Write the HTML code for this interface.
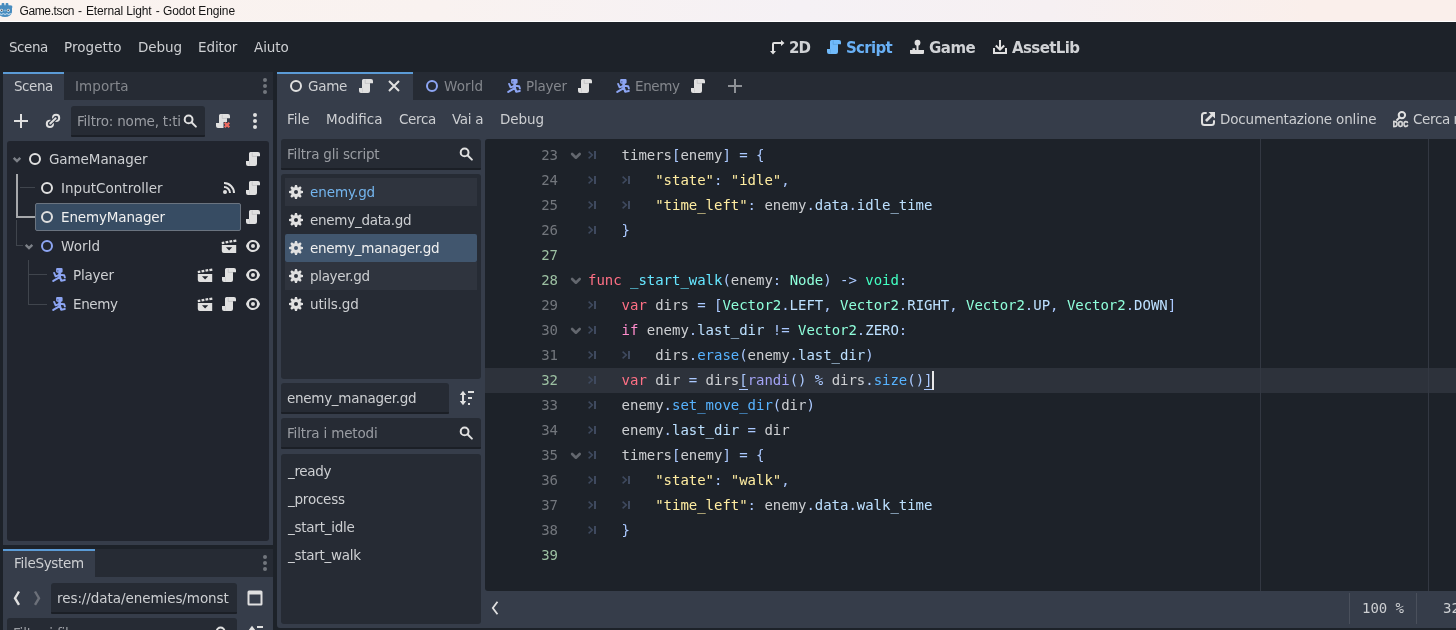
<!DOCTYPE html>
<html><head><meta charset="utf-8"><title>Game.tscn - Eternal Light - Godot Engine</title>
<style>
*{box-sizing:border-box;margin:0;padding:0}
html,body{width:1456px;height:630px;overflow:hidden;background:#1d2229}
body{position:relative;will-change:transform;font-family:"DejaVu Sans","Liberation Sans",sans-serif;font-size:13.5px;color:#cdcfd2}
.a{position:absolute}
.t{position:absolute;white-space:nowrap;line-height:20px;height:20px}
svg{position:absolute;overflow:visible}
#title{left:0;top:0;width:1456px;height:22px;background:linear-gradient(90deg,#faf3ef 0%,#f9f2f0 30%,#f5f1f5 55%,#f6f0f2 72%,#faefeb 90%,#faefeb 100%);border-bottom:1px solid #fff}
#title .t{color:#151515;font-family:"Liberation Sans",sans-serif;font-size:12px;top:1px}
.menu .t{top:37px;font-size:13.5px;color:#cdcfd2}
.mainb .t{top:37.5px;font-weight:bold;font-size:15px;color:#d0d2d5}
.tabbar{background:#262b34}
.tabsel{background:#363d4a;border-top:2px solid #5b9bd6}
.panel{background:#363d4a}
.dark{background:#1d2229}
.inp{background:#262b34;border-radius:3px 3px 1px 1px;border-bottom:2px solid #1b1f26}
.ph{color:#9a9da3}
.dim{color:#84878d}
.code{font-family:"DejaVu Sans Mono","Liberation Mono",monospace;font-size:14px;letter-spacing:-0.03px}
.ln{position:absolute;left:485px;width:971px;height:25px}
.ln .n{position:absolute;left:29px;width:44px;text-align:right;top:2px;line-height:20px;color:#73777d;font-family:"DejaVu Sans Mono","Liberation Mono",monospace;font-size:14px;letter-spacing:-0.03px}
.ln .n.s{color:#9cc0a2}
.ln .c{position:absolute;left:103px;top:2px;font-variant-ligatures:none;line-height:20px;white-space:pre;font-family:"DejaVu Sans Mono","Liberation Mono",monospace;font-size:14px;letter-spacing:-0.03px;color:#cdcfd2}
.ul{position:absolute;top:21px;width:8.400px;height:1px;background:#abc9ff}.caret{position:absolute;left:447.400px;top:3px;width:1.500px;height:19px;background:#e8e8e8}
.k{color:#ff7085}.cf{color:#ff8ccc}.bt{color:#42ffc2}.et{color:#8fffdb}.fd{color:#66e6ff}.fc{color:#57b3ff}.mv{color:#bce0ff}.st{color:#ffeda1}.sy{color:#abc9ff}.gf{color:#a3a3f5}
</style></head><body>
<div id="title" class="a"><span class="t" style="left:19.500px;letter-spacing:-0.38px">Game.tscn</span><span class="t" style="left:78px;letter-spacing:0.20px">-</span><span class="t" style="left:86px;letter-spacing:-0.15px">Eternal Light</span><span class="t" style="left:155.800px;letter-spacing:0.20px">-</span><span class="t" style="left:163px;letter-spacing:-0.12px">Godot Engine</span></div>

<div class="menu">
<span class="t" style="left:9px;letter-spacing:-0.47px">Scena</span>
<span class="t" style="left:64px;letter-spacing:0.05px">Progetto</span>
<span class="t" style="left:138px;letter-spacing:-0.08px">Debug</span>
<span class="t" style="left:198px;letter-spacing:-0.11px">Editor</span>
<span class="t" style="left:254px;letter-spacing:-0.07px">Aiuto</span>
</div>
<div class="mainb">
<span class="t" style="left:789px;letter-spacing:-1.01px">2D</span>
<span class="t" style="left:846px;color:#69b0f5;letter-spacing:-0.68px">Script</span>
<span class="t" style="left:929px;letter-spacing:-0.48px">Game</span>
<span class="t" style="left:1012px;letter-spacing:-0.60px">AssetLib</span>
</div>

<!-- left dock: Scene -->
<div class="a tabbar" style="left:3px;top:72px;width:270px;height:28px"></div>
<div class="a tabsel" style="left:3px;top:72px;width:61px;height:28px"></div>
<span class="t" style="left:14px;top:76px;letter-spacing:-0.47px">Scena</span>
<span class="t dim" style="left:75px;top:76px;letter-spacing:0.08px">Importa</span>
<div class="a panel" style="left:3px;top:100px;width:270px;height:445px"></div>
<div class="a inp" style="left:71px;top:106px;width:134px;height:31px"></div>
<span class="t ph" style="left:77px;top:111px;letter-spacing:-0.21px">Filtro: nome, t:ti</span>
<div class="a" style="left:7px;top:141px;width:262px;height:399.500px;border-radius:3px;background:#21252e"></div>
<div class="a" style="left:35px;top:203px;width:206px;height:28px;background:#374c63;border:1px solid #6b7480;border-radius:2px"></div>
<div id="tl">
<div class="a" style="left:16px;top:174px;width:2px;height:44px;background:#a6a8ab"></div>
<div class="a" style="left:16px;top:216px;width:19px;height:2px;background:#a6a8ab"></div>
<div class="a" style="left:20px;top:187px;width:15px;height:1px;background:#40454d"></div>
<div class="a" style="left:16px;top:220px;width:1px;height:26px;background:#40454d"></div>
<div class="a" style="left:16px;top:245px;width:7px;height:1px;background:#40454d"></div>
<div class="a" style="left:28px;top:260px;width:1px;height:45px;background:#40454d"></div>
<div class="a" style="left:28px;top:274px;width:19px;height:1px;background:#40454d"></div>
<div class="a" style="left:28px;top:304px;width:19px;height:1px;background:#40454d"></div>
</div>
<span class="t" style="left:49px;top:149px;letter-spacing:-0.09px">GameManager</span>
<span class="t" style="left:61px;top:178px;letter-spacing:0.02px">InputController</span>
<span class="t" style="left:61px;top:207px;color:#f0f0f0;letter-spacing:-0.15px">EnemyManager</span>
<span class="t" style="left:61px;top:236px;letter-spacing:0.11px">World</span>
<span class="t" style="left:73px;top:265px;letter-spacing:-0.21px">Player</span>
<span class="t" style="left:73px;top:294px;letter-spacing:-0.40px">Enemy</span>

<!-- left dock: FileSystem -->
<div class="a tabbar" style="left:3px;top:549px;width:270px;height:28px"></div>
<div class="a tabsel" style="left:3px;top:549px;width:92px;height:28px"></div>
<span class="t" style="left:14px;top:553px;letter-spacing:-0.30px">FileSystem</span>
<div class="a panel" style="left:3px;top:577px;width:270px;height:53px"></div>
<div class="a inp" style="left:51px;top:583px;width:186px;height:31px"></div>
<span class="t" style="left:57px;top:588px;letter-spacing:-0.07px">res://data/enemies/monst</span>
<div class="a inp" style="left:7px;top:618px;width:230px;height:31px"></div>
<span class="t ph" style="left:13px;top:623px;letter-spacing:-0.20px">Filtra i file</span>

<!-- main -->
<div class="a tabbar" style="left:277px;top:72px;width:1179px;height:28px"></div>
<div class="a tabsel" style="left:277px;top:72px;width:136px;height:28px"></div>
<span class="t" style="left:308px;top:76px;letter-spacing:-0.29px">Game</span>
<span class="t dim" style="left:444px;top:76px;letter-spacing:0.11px">World</span>
<span class="t dim" style="left:526px;top:76px;letter-spacing:-0.21px">Player</span>
<span class="t dim" style="left:635px;top:76px;letter-spacing:-0.40px">Enemy</span>
<div class="a panel" style="left:277px;top:100px;width:1179px;height:528px;border-radius:0 0 0 3px"></div>
<span class="t" style="left:287px;top:109px;letter-spacing:-0.05px">File</span>
<span class="t" style="left:326px;top:109px;letter-spacing:-0.00px">Modifica</span>
<span class="t" style="left:399px;top:109px;letter-spacing:-0.37px">Cerca</span>
<span class="t" style="left:452px;top:109px;letter-spacing:-0.34px">Vai a</span>
<span class="t" style="left:500px;top:109px;letter-spacing:-0.08px">Debug</span>
<span class="t" style="left:1220px;top:109px;letter-spacing:-0.16px">Documentazione online</span>
<span class="t" style="left:1413px;top:109px;letter-spacing:-0.37px">Cerca</span>
<span class="t" style="left:1453.500px;top:109px;letter-spacing:-0.19px">nella guida</span>

<!-- script list -->
<div class="a inp" style="left:281px;top:139px;width:200px;height:31px"></div>
<span class="t ph" style="left:287px;top:144px;letter-spacing:-0.19px">Filtra gli script</span>
<div class="a" style="left:281px;top:174px;width:200px;height:204.500px;background:#262b34;border-radius:3px"></div>
<div class="a" style="left:285px;top:178px;width:192px;height:28px;background:#2f343e"></div>
<div class="a" style="left:285px;top:234px;width:192px;height:28px;background:#41566e;border-radius:2px"></div>
<div class="a" style="left:285px;top:262px;width:192px;height:28px;background:#2f343e"></div>
<span class="t" style="left:310px;top:182px;color:#74b5ee;letter-spacing:-0.09px">enemy.gd</span>
<span class="t" style="left:310px;top:210px;letter-spacing:-0.28px">enemy_data.gd</span>
<span class="t" style="left:310px;top:238px;color:#f0f0f0;letter-spacing:-0.29px">enemy_manager.gd</span>
<span class="t" style="left:310px;top:266px;letter-spacing:-0.33px">player.gd</span>
<span class="t" style="left:310px;top:294px;letter-spacing:-0.15px">utils.gd</span>
<div class="a inp" style="left:281px;top:383px;width:168px;height:31px"></div>
<span class="t" style="left:287px;top:388px;letter-spacing:-0.29px">enemy_manager.gd</span>
<div class="a inp" style="left:281px;top:418px;width:200px;height:31px"></div>
<span class="t ph" style="left:287px;top:423px;letter-spacing:-0.17px">Filtra i metodi</span>
<div class="a" style="left:281px;top:453.500px;width:200px;height:170px;background:#262b34;border-radius:3px"></div>
<span class="t" style="left:288px;top:461px;letter-spacing:-0.32px">_ready</span>
<span class="t" style="left:288px;top:489px;letter-spacing:-0.23px">_process</span>
<span class="t" style="left:288px;top:517px;letter-spacing:-0.25px">_start_idle</span>
<span class="t" style="left:288px;top:545px;letter-spacing:-0.27px">_start_walk</span>

<!-- code editor -->
<div class="a dark" style="left:485px;top:139px;width:971px;height:452px;border-radius:3px 0 0 3px"></div>
<div class="a" style="left:485px;top:368px;width:971px;height:25px;background:#2d323b"></div>
<div class="a" style="left:1260px;top:139px;width:1px;height:452px;background:#333842"></div>
<div class="a" style="left:1428px;top:139px;width:1px;height:452px;background:#333842"></div>
<div id="code">
<div class="ln" style="top:143px"><span class="n">23</span><svg class="fold" style="left:85px;top:9px" width="12" height="8" viewBox="0 0 12 8"><path d="M2.100 2l3.800 3.700 3.800-3.700" fill="none" stroke="#63676e" stroke-width="2.600" stroke-linecap="round" stroke-linejoin="round"/></svg><svg class="tab" style="left:103.0px;top:8px" width="10" height="9" viewBox="0 0 10 9"><path d="M0.600 0.600l3.700 3.400-3.700 3.400" fill="none" stroke="#3f4a5f" stroke-width="1.500"/><path d="M7 0v8" stroke="#3f4a5f" stroke-width="2"/></svg><span class="c" style="left:136.6px">timers<span class="sy">[</span>enemy<span class="sy">] = {</span></span></div>
<div class="ln" style="top:168px"><span class="n">24</span><svg class="tab" style="left:103.0px;top:8px" width="10" height="9" viewBox="0 0 10 9"><path d="M0.600 0.600l3.700 3.400-3.700 3.400" fill="none" stroke="#3f4a5f" stroke-width="1.500"/><path d="M7 0v8" stroke="#3f4a5f" stroke-width="2"/></svg><svg class="tab" style="left:136.6px;top:8px" width="10" height="9" viewBox="0 0 10 9"><path d="M0.600 0.600l3.700 3.400-3.700 3.400" fill="none" stroke="#3f4a5f" stroke-width="1.500"/><path d="M7 0v8" stroke="#3f4a5f" stroke-width="2"/></svg><span class="c" style="left:170.2px"><span class="st">"state"</span><span class="sy">: </span><span class="st">"idle"</span><span class="sy">,</span></span></div>
<div class="ln" style="top:193px"><span class="n">25</span><svg class="tab" style="left:103.0px;top:8px" width="10" height="9" viewBox="0 0 10 9"><path d="M0.600 0.600l3.700 3.400-3.700 3.400" fill="none" stroke="#3f4a5f" stroke-width="1.500"/><path d="M7 0v8" stroke="#3f4a5f" stroke-width="2"/></svg><svg class="tab" style="left:136.6px;top:8px" width="10" height="9" viewBox="0 0 10 9"><path d="M0.600 0.600l3.700 3.400-3.700 3.400" fill="none" stroke="#3f4a5f" stroke-width="1.500"/><path d="M7 0v8" stroke="#3f4a5f" stroke-width="2"/></svg><span class="c" style="left:170.2px"><span class="st">"time_left"</span><span class="sy">: </span>enemy<span class="sy">.</span><span class="mv">data</span><span class="sy">.</span><span class="mv">idle_time</span></span></div>
<div class="ln" style="top:218px"><span class="n">26</span><svg class="tab" style="left:103.0px;top:8px" width="10" height="9" viewBox="0 0 10 9"><path d="M0.600 0.600l3.700 3.400-3.700 3.400" fill="none" stroke="#3f4a5f" stroke-width="1.500"/><path d="M7 0v8" stroke="#3f4a5f" stroke-width="2"/></svg><span class="c" style="left:136.6px"><span class="sy">}</span></span></div>
<div class="ln" style="top:243px"><span class="n s">27</span><span class="c" style="left:103.0px"></span></div>
<div class="ln" style="top:268px"><span class="n s">28</span><svg class="fold" style="left:85px;top:9px" width="12" height="8" viewBox="0 0 12 8"><path d="M2.100 2l3.800 3.700 3.800-3.700" fill="none" stroke="#63676e" stroke-width="2.600" stroke-linecap="round" stroke-linejoin="round"/></svg><span class="c" style="left:103.0px"><span class="k">func</span> <span class="fd">_start_walk</span><span class="sy">(</span>enemy<span class="sy">: </span><span class="et">Node</span><span class="sy">) -&gt; </span><span class="bt">void</span><span class="sy">:</span></span></div>
<div class="ln" style="top:293px"><span class="n">29</span><svg class="tab" style="left:103.0px;top:8px" width="10" height="9" viewBox="0 0 10 9"><path d="M0.600 0.600l3.700 3.400-3.700 3.400" fill="none" stroke="#3f4a5f" stroke-width="1.500"/><path d="M7 0v8" stroke="#3f4a5f" stroke-width="2"/></svg><span class="c" style="left:136.6px"><span class="k">var</span> dirs <span class="sy">= [</span><span class="et">Vector2</span><span class="sy">.</span><span class="mv">LEFT</span><span class="sy">, </span><span class="et">Vector2</span><span class="sy">.</span><span class="mv">RIGHT</span><span class="sy">, </span><span class="et">Vector2</span><span class="sy">.</span><span class="mv">UP</span><span class="sy">, </span><span class="et">Vector2</span><span class="sy">.</span><span class="mv">DOWN</span><span class="sy">]</span></span></div>
<div class="ln" style="top:318px"><span class="n">30</span><svg class="fold" style="left:85px;top:9px" width="12" height="8" viewBox="0 0 12 8"><path d="M2.100 2l3.800 3.700 3.800-3.700" fill="none" stroke="#63676e" stroke-width="2.600" stroke-linecap="round" stroke-linejoin="round"/></svg><svg class="tab" style="left:103.0px;top:8px" width="10" height="9" viewBox="0 0 10 9"><path d="M0.600 0.600l3.700 3.400-3.700 3.400" fill="none" stroke="#3f4a5f" stroke-width="1.500"/><path d="M7 0v8" stroke="#3f4a5f" stroke-width="2"/></svg><span class="c" style="left:136.6px"><span class="cf">if</span> enemy<span class="sy">.</span><span class="mv">last_dir</span><span class="sy"> != </span><span class="et">Vector2</span><span class="sy">.</span><span class="mv">ZERO</span><span class="sy">:</span></span></div>
<div class="ln" style="top:343px"><span class="n">31</span><svg class="tab" style="left:103.0px;top:8px" width="10" height="9" viewBox="0 0 10 9"><path d="M0.600 0.600l3.700 3.400-3.700 3.400" fill="none" stroke="#3f4a5f" stroke-width="1.500"/><path d="M7 0v8" stroke="#3f4a5f" stroke-width="2"/></svg><svg class="tab" style="left:136.6px;top:8px" width="10" height="9" viewBox="0 0 10 9"><path d="M0.600 0.600l3.700 3.400-3.700 3.400" fill="none" stroke="#3f4a5f" stroke-width="1.500"/><path d="M7 0v8" stroke="#3f4a5f" stroke-width="2"/></svg><span class="c" style="left:170.2px">dirs<span class="sy">.</span><span class="fc">erase</span><span class="sy">(</span>enemy<span class="sy">.</span><span class="mv">last_dir</span><span class="sy">)</span></span></div>
<div class="ln" style="top:368px"><span class="n s">32</span><svg class="tab" style="left:103.0px;top:8px" width="10" height="9" viewBox="0 0 10 9"><path d="M0.600 0.600l3.700 3.400-3.700 3.400" fill="none" stroke="#3f4a5f" stroke-width="1.500"/><path d="M7 0v8" stroke="#3f4a5f" stroke-width="2"/></svg><span class="c" style="left:136.6px"><span class="k">var</span> dir <span class="sy">= </span>dirs<span class="sy">[</span><span class="gf">randi</span><span class="sy">() % </span>dirs<span class="sy">.</span><span class="fc">size</span><span class="sy">()]</span></span><i class="ul" style="left:254.200px"></i><i class="ul" style="left:439px"></i><i class="caret"></i></div>
<div class="ln" style="top:393px"><span class="n">33</span><svg class="tab" style="left:103.0px;top:8px" width="10" height="9" viewBox="0 0 10 9"><path d="M0.600 0.600l3.700 3.400-3.700 3.400" fill="none" stroke="#3f4a5f" stroke-width="1.500"/><path d="M7 0v8" stroke="#3f4a5f" stroke-width="2"/></svg><span class="c" style="left:136.6px">enemy<span class="sy">.</span><span class="fc">set_move_dir</span><span class="sy">(</span>dir<span class="sy">)</span></span></div>
<div class="ln" style="top:418px"><span class="n">34</span><svg class="tab" style="left:103.0px;top:8px" width="10" height="9" viewBox="0 0 10 9"><path d="M0.600 0.600l3.700 3.400-3.700 3.400" fill="none" stroke="#3f4a5f" stroke-width="1.500"/><path d="M7 0v8" stroke="#3f4a5f" stroke-width="2"/></svg><span class="c" style="left:136.6px">enemy<span class="sy">.</span><span class="mv">last_dir</span><span class="sy"> = </span>dir</span></div>
<div class="ln" style="top:443px"><span class="n">35</span><svg class="fold" style="left:85px;top:9px" width="12" height="8" viewBox="0 0 12 8"><path d="M2.100 2l3.800 3.700 3.800-3.700" fill="none" stroke="#63676e" stroke-width="2.600" stroke-linecap="round" stroke-linejoin="round"/></svg><svg class="tab" style="left:103.0px;top:8px" width="10" height="9" viewBox="0 0 10 9"><path d="M0.600 0.600l3.700 3.400-3.700 3.400" fill="none" stroke="#3f4a5f" stroke-width="1.500"/><path d="M7 0v8" stroke="#3f4a5f" stroke-width="2"/></svg><span class="c" style="left:136.6px">timers<span class="sy">[</span>enemy<span class="sy">] = {</span></span></div>
<div class="ln" style="top:468px"><span class="n">36</span><svg class="tab" style="left:103.0px;top:8px" width="10" height="9" viewBox="0 0 10 9"><path d="M0.600 0.600l3.700 3.400-3.700 3.400" fill="none" stroke="#3f4a5f" stroke-width="1.500"/><path d="M7 0v8" stroke="#3f4a5f" stroke-width="2"/></svg><svg class="tab" style="left:136.6px;top:8px" width="10" height="9" viewBox="0 0 10 9"><path d="M0.600 0.600l3.700 3.400-3.700 3.400" fill="none" stroke="#3f4a5f" stroke-width="1.500"/><path d="M7 0v8" stroke="#3f4a5f" stroke-width="2"/></svg><span class="c" style="left:170.2px"><span class="st">"state"</span><span class="sy">: </span><span class="st">"walk"</span><span class="sy">,</span></span></div>
<div class="ln" style="top:493px"><span class="n">37</span><svg class="tab" style="left:103.0px;top:8px" width="10" height="9" viewBox="0 0 10 9"><path d="M0.600 0.600l3.700 3.400-3.700 3.400" fill="none" stroke="#3f4a5f" stroke-width="1.500"/><path d="M7 0v8" stroke="#3f4a5f" stroke-width="2"/></svg><svg class="tab" style="left:136.6px;top:8px" width="10" height="9" viewBox="0 0 10 9"><path d="M0.600 0.600l3.700 3.400-3.700 3.400" fill="none" stroke="#3f4a5f" stroke-width="1.500"/><path d="M7 0v8" stroke="#3f4a5f" stroke-width="2"/></svg><span class="c" style="left:170.2px"><span class="st">"time_left"</span><span class="sy">: </span>enemy<span class="sy">.</span><span class="mv">data</span><span class="sy">.</span><span class="mv">walk_time</span></span></div>
<div class="ln" style="top:518px"><span class="n">38</span><svg class="tab" style="left:103.0px;top:8px" width="10" height="9" viewBox="0 0 10 9"><path d="M0.600 0.600l3.700 3.400-3.700 3.400" fill="none" stroke="#3f4a5f" stroke-width="1.500"/><path d="M7 0v8" stroke="#3f4a5f" stroke-width="2"/></svg><span class="c" style="left:136.6px"><span class="sy">}</span></span></div>
<div class="ln" style="top:543px"><span class="n s">39</span><span class="c" style="left:103.0px"></span></div>
</div><!--endcode-->
<span class="t code" style="left:1362px;top:598px">100 %</span>
<span class="t code" style="left:1443px;top:598px">32 :</span>
<div class="a" style="left:1349px;top:593px;width:1px;height:31px;background:#4a505c"></div>
<div class="a" style="left:1416px;top:593px;width:1px;height:31px;background:#4a505c"></div>


















<div id="icons">
<svg style="left:-3px;top:0px" width="16" height="18" viewBox="0 0 16 18"><g fill="#478cbf"><rect x="1" y="5.200" width="14" height="8.800" rx="3"/><ellipse cx="8" cy="12.600" rx="6.600" ry="4.300"/><rect x="4.600" y="3" width="2.800" height="4" rx=".9"/><rect x="8.600" y="3" width="2.800" height="4" rx=".9"/><circle cx="2" cy="6.900" r="1.400"/><circle cx="14" cy="6.900" r="1.400"/></g><path d="M1.500 13.700h2.200v.9h1.600v-.9h2v.9h1.600v-.9h2v.9h1.600v-.9h2" fill="none" stroke="#cfe2f1" stroke-width=".8"/><circle cx="4.600" cy="10.300" r="1.500" fill="#e8eef4"/><circle cx="11.300" cy="10.300" r="1.500" fill="#e8eef4"/><circle cx="4.700" cy="10.300" r=".8" fill="#3c3c40"/><circle cx="11.200" cy="10.300" r=".8" fill="#3c3c40"/><rect x="7.400" y="9.400" width="1.100" height="2" rx=".4" fill="#a9cbe6"/></svg>
<svg style="left:769px;top:39px" width="16" height="16" viewBox="0 0 16 16"><path d="M12 1v2H5a2 2 0 0 0-2 2v7H1l3 3.500L7 12H5V5h7v2l3.500-3z" fill="#e0e0e0"/></svg>
<svg style="left:826px;top:39px" width="16" height="16" viewBox="0 0 16 16"><path d="M5.500 1A1.500 1.500 0 0 0 4 2.500V10H1v3a2 2 0 0 0 2 2h7a2 2 0 0 0 2-2V5.300h3V3a2 2 0 0 0-2-2z" fill="#70bafa"/><path d="M7.200 1.500v3.900H12" fill="none" stroke="#4c8cc4" stroke-width="0.600" opacity=".75"/><path d="M4.300 10.200V14.500" stroke="#4c8cc4" stroke-width=".6" opacity=".6"/></svg>
<svg style="left:909px;top:39px" width="16" height="16" viewBox="0 0 16 16"><circle cx="8.500" cy="3.700" r="2.900" fill="#e0e0e0"/><rect x="7.500" y="5" width="2" height="6" fill="#e0e0e0"/><path d="M1 11h2.500V9.300h2.600V11H15v3a1 1 0 0 1-1 1H2a1 1 0 0 1-1-1z" fill="#e0e0e0"/></svg>
<svg style="left:992px;top:39px" width="16" height="16" viewBox="0 0 16 16"><path d="M8 1v9M3.800 6.500L8 10.700l4.200-4.200M2 9v5h12V9" fill="none" stroke="#e0e0e0" stroke-width="2"/></svg>
<svg style="left:257px;top:78px" width="16" height="16" viewBox="0 0 16 16"><circle cx="8" cy="2" r="2" fill="#72767d"/><circle cx="8" cy="8" r="2" fill="#72767d"/><circle cx="8" cy="14" r="2" fill="#72767d"/></svg>
<svg style="left:13px;top:113px" width="16" height="16" viewBox="0 0 16 16"><path d="M7 1v6H1v2h6v6h2V9h6V7H9V1z" fill="#e0e0e0"/></svg>
<svg style="left:45px;top:113px" width="16" height="16" viewBox="0 0 16 16"><circle cx="4.900" cy="10.900" r="3.100" fill="none" stroke="#e0e0e0" stroke-width="2"/><circle cx="11.100" cy="4.900" r="3.100" fill="none" stroke="#e0e0e0" stroke-width="2"/><path d="M5.300 10.500L10.700 5.300" stroke="#363d4a" stroke-width="4.200" stroke-linecap="round"/><path d="M5.300 10.500L10.700 5.300" stroke="#e0e0e0" stroke-width="1.900" stroke-linecap="round"/></svg>
<svg style="left:182px;top:113px" width="16" height="16" viewBox="0 0 16 16"><circle cx="6.600" cy="6.400" r="3.900" fill="none" stroke="#e0e0e0" stroke-width="2"/><path d="M9.500 9.300l4.400 4.300" stroke="#e0e0e0" stroke-width="2" stroke-linecap="round"/></svg>
<svg style="left:215px;top:113px" width="16" height="16" viewBox="0 0 16 16"><path d="M5.500 1A1.500 1.500 0 0 0 4 2.500V10H1v3a2 2 0 0 0 2 2h5.500V9H12V5.300h3V3a2 2 0 0 0-2-2z" fill="#e0e0e0"/><path d="M7.200 1.500v3.900H12" fill="none" stroke="#a9abae" stroke-width="0.600" opacity=".75"/><path d="M9.700 9.700l4.600 4.600M14.300 9.700l-4.600 4.600" stroke="#f26b60" stroke-width="2.100"/></svg>
<svg style="left:247px;top:113px" width="16" height="16" viewBox="0 0 16 16"><circle cx="8" cy="2" r="2" fill="#e0e0e0"/><circle cx="8" cy="8" r="2" fill="#e0e0e0"/><circle cx="8" cy="14" r="2" fill="#e0e0e0"/></svg>
<svg style="left:12px;top:156px" width="10" height="7" viewBox="0 0 10 7"><path d="M1.700 1.800L5 5.100 8.300 1.800" fill="none" stroke="#7d8188" stroke-width="2.400"/></svg>
<svg style="left:27px;top:151px" width="16" height="16" viewBox="0 0 16 16"><circle cx="8" cy="8" r="5" fill="none" stroke="#e0e0e0" stroke-width="2"/></svg>
<svg style="left:245px;top:151px" width="16" height="16" viewBox="0 0 16 16"><path d="M5.500 1A1.500 1.500 0 0 0 4 2.500V10H1v3a2 2 0 0 0 2 2h7a2 2 0 0 0 2-2V5.300h3V3a2 2 0 0 0-2-2z" fill="#e0e0e0"/><path d="M7.200 1.500v3.900H12" fill="none" stroke="#a9abae" stroke-width="0.600" opacity=".75"/><path d="M4.300 10.200V14.500" stroke="#a9abae" stroke-width=".6" opacity=".6"/></svg>
<svg style="left:39px;top:180px" width="16" height="16" viewBox="0 0 16 16"><circle cx="8" cy="8" r="5" fill="none" stroke="#e0e0e0" stroke-width="2"/></svg>
<svg style="left:221px;top:180px" width="16" height="16" viewBox="0 0 16 16"><circle cx="4" cy="12" r="2" fill="#e0e0e0"/><path d="M3 7A6 6 0 0 1 9 13M3 3A10 10 0 0 1 13 13" fill="none" stroke="#e0e0e0" stroke-width="2"/></svg>
<svg style="left:245px;top:180px" width="16" height="16" viewBox="0 0 16 16"><path d="M5.500 1A1.500 1.500 0 0 0 4 2.500V10H1v3a2 2 0 0 0 2 2h7a2 2 0 0 0 2-2V5.300h3V3a2 2 0 0 0-2-2z" fill="#e0e0e0"/><path d="M7.200 1.500v3.900H12" fill="none" stroke="#a9abae" stroke-width="0.600" opacity=".75"/><path d="M4.300 10.200V14.500" stroke="#a9abae" stroke-width=".6" opacity=".6"/></svg>
<svg style="left:39px;top:209px" width="16" height="16" viewBox="0 0 16 16"><circle cx="8" cy="8" r="5" fill="none" stroke="#e0e0e0" stroke-width="2"/></svg>
<svg style="left:245px;top:209px" width="16" height="16" viewBox="0 0 16 16"><path d="M5.500 1A1.500 1.500 0 0 0 4 2.500V10H1v3a2 2 0 0 0 2 2h7a2 2 0 0 0 2-2V5.300h3V3a2 2 0 0 0-2-2z" fill="#e0e0e0"/><path d="M7.200 1.500v3.900H12" fill="none" stroke="#a9abae" stroke-width="0.600" opacity=".75"/><path d="M4.300 10.200V14.500" stroke="#a9abae" stroke-width=".6" opacity=".6"/></svg>
<svg style="left:24px;top:243px" width="10" height="7" viewBox="0 0 10 7"><path d="M1.700 1.800L5 5.100 8.300 1.800" fill="none" stroke="#7d8188" stroke-width="2.400"/></svg>
<svg style="left:39px;top:238px" width="16" height="16" viewBox="0 0 16 16"><circle cx="8" cy="8" r="5" fill="none" stroke="#8da5f3" stroke-width="2"/></svg>
<svg style="left:221px;top:238px" width="16" height="16" viewBox="0 0 16 16"><path d="M.8 7h14.400v8H2.800a2 2 0 0 1-2-2z" fill="#e0e0e0"/><path d="M5 9.200h6.200l-3.100 3.300z" fill="#21252e"/><g fill="#e0e0e0"><path d="M.6 4l2.500-.5.400 2.200-2.500.5z"/><path d="M4.400 3.300l2.700-.5.400 2.200-2.700.5z"/><path d="M8.300 2.600l2.700-.5.400 2.200-2.700.5z"/><path d="M12.200 1.900l2.900-.5.400 2.300-2.900.5z"/></g></svg>
<svg style="left:245px;top:238px" width="16" height="16" viewBox="0 0 16 16"><path d="M8 2C5.440 2 2.210 3.950 1.050 7.700a1 1 0 0 0 0 .55C2.160 12.010 5.440 14 8 14s5.840-1.990 6.950-5.750a1 1 0 0 0 0-.55C13.860 3.940 10.550 2 8 2zm0 2a4 4 0 0 1 0 8 4 4 0 0 1 0-8zm0 2a2 2 0 0 0 0 4 2 2 0 0 0 0-4z" fill="#e0e0e0" fill-rule="evenodd"/></svg>
<svg style="left:51px;top:267px" width="16" height="16" viewBox="0 0 16 16"><rect x="5.100" y="1" width="6.500" height="4.700" rx="1.100" fill="#8da5f3"/><rect x="6" y="3.300" width="1.600" height="1.100" fill="#5667a0"/><g fill="none" stroke="#8da5f3" stroke-linecap="round" stroke-linejoin="round"><path d="M8.600 5.800L8.700 10.200" stroke-width="2.600"/><path d="M8.300 8L4.600 9.300 3.100 5.900M9 7.700l4.200.5.700 2.400" stroke-width="1.900"/><path d="M8.300 10.400L2.300 13.900M9.100 10.400l1.100 3.300 3.600-.7" stroke-width="2.100"/></g></svg>
<svg style="left:197px;top:267px" width="16" height="16" viewBox="0 0 16 16"><path d="M.8 7h14.400v8H2.800a2 2 0 0 1-2-2z" fill="#e0e0e0"/><path d="M5 9.200h6.200l-3.100 3.300z" fill="#21252e"/><g fill="#e0e0e0"><path d="M.6 4l2.500-.5.400 2.200-2.500.5z"/><path d="M4.400 3.300l2.700-.5.400 2.200-2.700.5z"/><path d="M8.300 2.600l2.700-.5.400 2.200-2.700.5z"/><path d="M12.200 1.900l2.900-.5.400 2.300-2.900.5z"/></g></svg>
<svg style="left:221px;top:267px" width="16" height="16" viewBox="0 0 16 16"><path d="M5.500 1A1.500 1.500 0 0 0 4 2.500V10H1v3a2 2 0 0 0 2 2h7a2 2 0 0 0 2-2V5.300h3V3a2 2 0 0 0-2-2z" fill="#e0e0e0"/><path d="M7.200 1.500v3.900H12" fill="none" stroke="#a9abae" stroke-width="0.600" opacity=".75"/><path d="M4.300 10.200V14.500" stroke="#a9abae" stroke-width=".6" opacity=".6"/></svg>
<svg style="left:245px;top:267px" width="16" height="16" viewBox="0 0 16 16"><path d="M8 2C5.440 2 2.210 3.950 1.050 7.700a1 1 0 0 0 0 .55C2.160 12.010 5.440 14 8 14s5.840-1.990 6.950-5.750a1 1 0 0 0 0-.55C13.860 3.940 10.550 2 8 2zm0 2a4 4 0 0 1 0 8 4 4 0 0 1 0-8zm0 2a2 2 0 0 0 0 4 2 2 0 0 0 0-4z" fill="#e0e0e0" fill-rule="evenodd"/></svg>
<svg style="left:51px;top:296px" width="16" height="16" viewBox="0 0 16 16"><rect x="5.100" y="1" width="6.500" height="4.700" rx="1.100" fill="#8da5f3"/><rect x="6" y="3.300" width="1.600" height="1.100" fill="#5667a0"/><g fill="none" stroke="#8da5f3" stroke-linecap="round" stroke-linejoin="round"><path d="M8.600 5.800L8.700 10.200" stroke-width="2.600"/><path d="M8.300 8L4.600 9.300 3.100 5.900M9 7.700l4.200.5.700 2.400" stroke-width="1.900"/><path d="M8.300 10.400L2.300 13.900M9.100 10.400l1.100 3.300 3.600-.7" stroke-width="2.100"/></g></svg>
<svg style="left:197px;top:296px" width="16" height="16" viewBox="0 0 16 16"><path d="M.8 7h14.400v8H2.800a2 2 0 0 1-2-2z" fill="#e0e0e0"/><path d="M5 9.200h6.200l-3.100 3.300z" fill="#21252e"/><g fill="#e0e0e0"><path d="M.6 4l2.500-.5.400 2.200-2.500.5z"/><path d="M4.400 3.300l2.700-.5.400 2.200-2.700.5z"/><path d="M8.300 2.600l2.700-.5.400 2.200-2.700.5z"/><path d="M12.200 1.900l2.900-.5.400 2.300-2.900.5z"/></g></svg>
<svg style="left:221px;top:296px" width="16" height="16" viewBox="0 0 16 16"><path d="M5.500 1A1.500 1.500 0 0 0 4 2.500V10H1v3a2 2 0 0 0 2 2h7a2 2 0 0 0 2-2V5.300h3V3a2 2 0 0 0-2-2z" fill="#e0e0e0"/><path d="M7.200 1.500v3.900H12" fill="none" stroke="#a9abae" stroke-width="0.600" opacity=".75"/><path d="M4.300 10.200V14.500" stroke="#a9abae" stroke-width=".6" opacity=".6"/></svg>
<svg style="left:245px;top:296px" width="16" height="16" viewBox="0 0 16 16"><path d="M8 2C5.440 2 2.210 3.950 1.050 7.700a1 1 0 0 0 0 .55C2.160 12.010 5.440 14 8 14s5.840-1.990 6.950-5.750a1 1 0 0 0 0-.55C13.860 3.940 10.550 2 8 2zm0 2a4 4 0 0 1 0 8 4 4 0 0 1 0-8zm0 2a2 2 0 0 0 0 4 2 2 0 0 0 0-4z" fill="#e0e0e0" fill-rule="evenodd"/></svg>
<svg style="left:257px;top:555px" width="16" height="16" viewBox="0 0 16 16"><circle cx="8" cy="2" r="2" fill="#72767d"/><circle cx="8" cy="8" r="2" fill="#72767d"/><circle cx="8" cy="14" r="2" fill="#72767d"/></svg>
<svg style="left:12px;top:590px" width="10" height="16" viewBox="0 0 10 16"><path d="M7 1.500L3 8.200l4 6.700" fill="none" stroke="#e0e0e0" stroke-width="2.400"/></svg>
<svg style="left:32px;top:590px" width="10" height="16" viewBox="0 0 10 16"><path d="M3 1.500l4 6.700-4 6.700" fill="none" stroke="#6c7079" stroke-width="2.400"/></svg>
<svg style="left:247px;top:590px" width="16" height="16" viewBox="0 0 16 16"><path d="M2 .5h12a1.500 1.500 0 0 1 1.500 1.500v12a1.500 1.500 0 0 1-1.500 1.500H2A1.500 1.500 0 0 1 .5 14V2A1.500 1.500 0 0 1 2 .5zM2.500 4.500v9h11v-9z" fill="#e0e0e0" fill-rule="evenodd"/></svg>
<svg style="left:214px;top:625px" width="16" height="16" viewBox="0 0 16 16"><circle cx="6.600" cy="6.400" r="3.900" fill="none" stroke="#e0e0e0" stroke-width="2"/><path d="M9.500 9.300l4.400 4.300" stroke="#e0e0e0" stroke-width="2" stroke-linecap="round"/></svg>
<svg style="left:247px;top:625px" width="16" height="16" viewBox="0 0 16 16"><path d="M5 2.500v11" stroke="#e0e0e0" stroke-width="2" fill="none"/><path d="M5 .8L8.200 5H1.800zM5 15.200L8.200 11H1.800z" fill="#e0e0e0"/><path d="M10 1h6v2h-6zM10 7h4v2h-4zM10 13h2v2h-2z" fill="#e0e0e0"/></svg>
<svg style="left:288px;top:78px" width="16" height="16" viewBox="0 0 16 16"><circle cx="8" cy="8" r="5" fill="none" stroke="#e0e0e0" stroke-width="2"/></svg>
<svg style="left:358px;top:78px" width="16" height="16" viewBox="0 0 16 16"><path d="M5.500 1A1.500 1.500 0 0 0 4 2.500V10H1v3a2 2 0 0 0 2 2h7a2 2 0 0 0 2-2V5.300h3V3a2 2 0 0 0-2-2z" fill="#e0e0e0"/><path d="M7.200 1.500v3.900H12" fill="none" stroke="#a9abae" stroke-width="0.600" opacity=".75"/><path d="M4.300 10.200V14.500" stroke="#a9abae" stroke-width=".6" opacity=".6"/></svg>
<svg style="left:386px;top:78px" width="16" height="16" viewBox="0 0 16 16"><path d="M3 3l10 10M13 3L3 13" stroke="#e0e0e0" stroke-width="2" fill="none"/></svg>
<svg style="left:424px;top:78px" width="16" height="16" viewBox="0 0 16 16"><circle cx="8" cy="8" r="5" fill="none" stroke="#8da5f3" stroke-width="2"/></svg>
<svg style="left:506px;top:78px" width="16" height="16" viewBox="0 0 16 16"><rect x="5.100" y="1" width="6.500" height="4.700" rx="1.100" fill="#8da5f3"/><rect x="6" y="3.300" width="1.600" height="1.100" fill="#5667a0"/><g fill="none" stroke="#8da5f3" stroke-linecap="round" stroke-linejoin="round"><path d="M8.600 5.800L8.700 10.200" stroke-width="2.600"/><path d="M8.300 8L4.600 9.300 3.100 5.900M9 7.700l4.200.5.700 2.400" stroke-width="1.900"/><path d="M8.300 10.400L2.300 13.900M9.100 10.400l1.100 3.300 3.600-.7" stroke-width="2.100"/></g></svg>
<svg style="left:577px;top:78px" width="16" height="16" viewBox="0 0 16 16"><path d="M5.500 1A1.500 1.500 0 0 0 4 2.500V10H1v3a2 2 0 0 0 2 2h7a2 2 0 0 0 2-2V5.300h3V3a2 2 0 0 0-2-2z" fill="#e0e0e0"/><path d="M7.200 1.500v3.900H12" fill="none" stroke="#a9abae" stroke-width="0.600" opacity=".75"/><path d="M4.300 10.200V14.500" stroke="#a9abae" stroke-width=".6" opacity=".6"/></svg>
<svg style="left:615px;top:78px" width="16" height="16" viewBox="0 0 16 16"><rect x="5.100" y="1" width="6.500" height="4.700" rx="1.100" fill="#8da5f3"/><rect x="6" y="3.300" width="1.600" height="1.100" fill="#5667a0"/><g fill="none" stroke="#8da5f3" stroke-linecap="round" stroke-linejoin="round"><path d="M8.600 5.800L8.700 10.200" stroke-width="2.600"/><path d="M8.300 8L4.600 9.300 3.100 5.900M9 7.700l4.200.5.700 2.400" stroke-width="1.900"/><path d="M8.300 10.400L2.300 13.900M9.100 10.400l1.100 3.300 3.600-.7" stroke-width="2.100"/></g></svg>
<svg style="left:690px;top:78px" width="16" height="16" viewBox="0 0 16 16"><path d="M5.500 1A1.500 1.500 0 0 0 4 2.500V10H1v3a2 2 0 0 0 2 2h7a2 2 0 0 0 2-2V5.300h3V3a2 2 0 0 0-2-2z" fill="#e0e0e0"/><path d="M7.200 1.500v3.900H12" fill="none" stroke="#a9abae" stroke-width="0.600" opacity=".75"/><path d="M4.300 10.200V14.500" stroke="#a9abae" stroke-width=".6" opacity=".6"/></svg>
<svg style="left:727px;top:78px" width="16" height="16" viewBox="0 0 16 16"><path d="M7 1v6H1v2h6v6h2V9h6V7H9V1z" fill="#8e9196"/></svg>
<svg style="left:1200px;top:111px" width="16" height="16" viewBox="0 0 16 16"><path d="M6.700 2H4.500A2.500 2.500 0 0 0 2 4.500v7A2.500 2.500 0 0 0 4.500 14h7a2.500 2.500 0 0 0 2.500-2.500V9.200" fill="none" stroke="#e0e0e0" stroke-width="2"/><path d="M8.500 1H15v6.500l-2.300-2.300-5.800 5.800-1.900-1.900 5.800-5.800z" fill="#e0e0e0"/></svg>
<svg style="left:1393px;top:111px" width="16" height="16" viewBox="0 0 16 16"><circle cx="8.900" cy="4.100" r="3.200" fill="none" stroke="#e0e0e0" stroke-width="2"/><path d="M6.600 6.500L4 8.900" stroke="#e0e0e0" stroke-width="2" stroke-linecap="round"/><text x="-.3" y="16.100" font-family="Liberation Sans,sans-serif" font-weight="bold" font-size="8.600" fill="#e0e0e0" stroke="#e0e0e0" stroke-width=".5" textLength="15.500" lengthAdjust="spacingAndGlyphs">DOC</text></svg>
<svg style="left:458px;top:146px" width="16" height="16" viewBox="0 0 16 16"><circle cx="6.600" cy="6.400" r="3.900" fill="none" stroke="#e0e0e0" stroke-width="2"/><path d="M9.500 9.300l4.400 4.300" stroke="#e0e0e0" stroke-width="2" stroke-linecap="round"/></svg>
<svg style="left:458px;top:425px" width="16" height="16" viewBox="0 0 16 16"><circle cx="6.600" cy="6.400" r="3.900" fill="none" stroke="#e0e0e0" stroke-width="2"/><path d="M9.500 9.300l4.400 4.300" stroke="#e0e0e0" stroke-width="2" stroke-linecap="round"/></svg>
<svg style="left:288px;top:184px" width="16" height="16" viewBox="0 0 16 16"><path d="M7 1l-.56 2.260a5 5 0 0 0-.69.280L3.760 2.340 2.340 3.760l1.200 1.990a5 5 0 0 0-.29.690L1 7v2l2.260.56a5 5 0 0 0 .28.690l-1.200 1.990 1.420 1.420 1.990-1.200a5 5 0 0 0 .69.290L7 15h2l.56-2.260a5 5 0 0 0 .69-.28l1.990 1.200 1.420-1.420-1.200-1.990a5 5 0 0 0 .29-.69L15 9V7l-2.260-.56a5 5 0 0 0-.28-.69l1.200-1.990-1.420-1.420-1.990 1.200a5 5 0 0 0-.69-.29L9 1zm1 5a2 2 0 0 1 0 4 2 2 0 0 1 0-4z" fill="#e0e0e0" fill-rule="evenodd"/></svg>
<svg style="left:288px;top:212px" width="16" height="16" viewBox="0 0 16 16"><path d="M7 1l-.56 2.260a5 5 0 0 0-.69.280L3.760 2.340 2.340 3.760l1.200 1.990a5 5 0 0 0-.29.690L1 7v2l2.260.56a5 5 0 0 0 .28.690l-1.200 1.990 1.420 1.420 1.990-1.200a5 5 0 0 0 .69.290L7 15h2l.56-2.260a5 5 0 0 0 .69-.28l1.990 1.200 1.420-1.420-1.200-1.990a5 5 0 0 0 .29-.69L15 9V7l-2.260-.56a5 5 0 0 0-.28-.69l1.200-1.990-1.420-1.420-1.990 1.200a5 5 0 0 0-.69-.29L9 1zm1 5a2 2 0 0 1 0 4 2 2 0 0 1 0-4z" fill="#e0e0e0" fill-rule="evenodd"/></svg>
<svg style="left:288px;top:240px" width="16" height="16" viewBox="0 0 16 16"><path d="M7 1l-.56 2.260a5 5 0 0 0-.69.280L3.760 2.340 2.340 3.760l1.200 1.990a5 5 0 0 0-.29.690L1 7v2l2.260.56a5 5 0 0 0 .28.690l-1.200 1.990 1.420 1.420 1.990-1.200a5 5 0 0 0 .69.290L7 15h2l.56-2.260a5 5 0 0 0 .69-.28l1.990 1.200 1.420-1.420-1.200-1.990a5 5 0 0 0 .29-.69L15 9V7l-2.260-.56a5 5 0 0 0-.28-.69l1.200-1.990-1.420-1.420-1.990 1.200a5 5 0 0 0-.69-.29L9 1zm1 5a2 2 0 0 1 0 4 2 2 0 0 1 0-4z" fill="#e0e0e0" fill-rule="evenodd"/></svg>
<svg style="left:288px;top:268px" width="16" height="16" viewBox="0 0 16 16"><path d="M7 1l-.56 2.260a5 5 0 0 0-.69.280L3.760 2.340 2.340 3.760l1.200 1.990a5 5 0 0 0-.29.690L1 7v2l2.260.56a5 5 0 0 0 .28.690l-1.200 1.990 1.420 1.420 1.990-1.200a5 5 0 0 0 .69.290L7 15h2l.56-2.260a5 5 0 0 0 .69-.28l1.990 1.200 1.420-1.420-1.200-1.990a5 5 0 0 0 .29-.69L15 9V7l-2.260-.56a5 5 0 0 0-.28-.69l1.200-1.990-1.420-1.420-1.990 1.200a5 5 0 0 0-.69-.29L9 1zm1 5a2 2 0 0 1 0 4 2 2 0 0 1 0-4z" fill="#e0e0e0" fill-rule="evenodd"/></svg>
<svg style="left:288px;top:296px" width="16" height="16" viewBox="0 0 16 16"><path d="M7 1l-.56 2.260a5 5 0 0 0-.69.280L3.760 2.340 2.340 3.760l1.200 1.990a5 5 0 0 0-.29.690L1 7v2l2.260.56a5 5 0 0 0 .28.690l-1.200 1.990 1.420 1.420 1.990-1.200a5 5 0 0 0 .69.290L7 15h2l.56-2.260a5 5 0 0 0 .69-.28l1.990 1.200 1.420-1.420-1.200-1.990a5 5 0 0 0 .29-.69L15 9V7l-2.260-.56a5 5 0 0 0-.28-.69l1.200-1.990-1.420-1.420-1.990 1.200a5 5 0 0 0-.69-.29L9 1zm1 5a2 2 0 0 1 0 4 2 2 0 0 1 0-4z" fill="#e0e0e0" fill-rule="evenodd"/></svg>
<svg style="left:458px;top:390px" width="16" height="16" viewBox="0 0 16 16"><path d="M5 2.500v11" stroke="#e0e0e0" stroke-width="2" fill="none"/><path d="M5 .8L8.200 5H1.800zM5 15.200L8.200 11H1.800z" fill="#e0e0e0"/><path d="M10 1h6v2h-6zM10 7h4v2h-4zM10 13h2v2h-2z" fill="#e0e0e0"/></svg>
<svg style="left:490px;top:600px" width="10" height="16" viewBox="0 0 10 16"><path d="M7.500 1.800L2.800 8l4.700 6.200" fill="none" stroke="#e0e0e0" stroke-width="1.800"/></svg>
</div><!--endicons-->
</body></html>
